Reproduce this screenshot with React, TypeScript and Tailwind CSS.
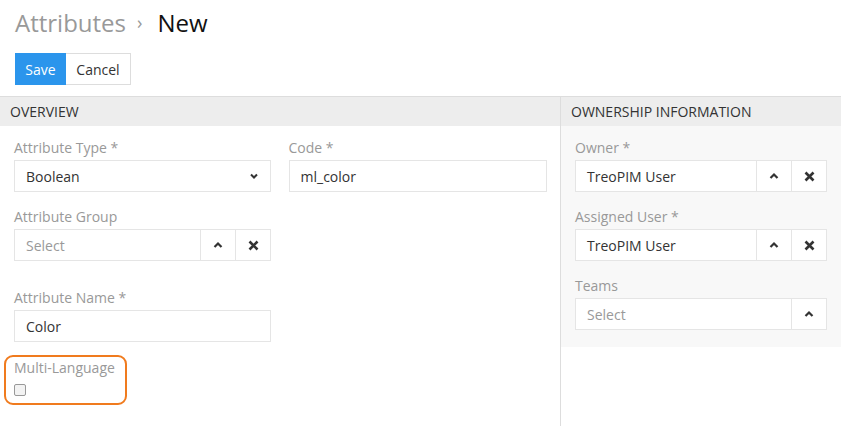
import React from 'react';

const font = { fontFamily: '"Open Sans", "Liberation Sans", sans-serif' };

function ChevronUp() {
  return (
    <svg width="10" height="8" viewBox="0 0 10 8">
      <path d="M1.5 6 L5 2.5 L8.5 6" fill="none" stroke="#333" strokeWidth="2.2" />
    </svg>
  );
}

function Times() {
  return (
    <svg width="11" height="11" viewBox="0 0 11 11">
      <path d="M1.5 1.5 L9.5 9.5 M9.5 1.5 L1.5 9.5" fill="none" stroke="#333" strokeWidth="2.6" />
    </svg>
  );
}

function Label({ children }: { children: React.ReactNode }) {
  return <div className="text-[14px] leading-[20px] text-[#999] mb-[2px]">{children}</div>;
}

function TextInput({ value }: { value: string }) {
  return (
    <div className="h-[32px] border border-[#e5e5e5] bg-white px-[11px] flex items-center text-[14px] text-[#333]">
      {value}
    </div>
  );
}

function LinkInput({ value, placeholder, clear = true }: { value?: string; placeholder?: string; clear?: boolean }) {
  return (
    <div className="h-[32px] border border-[#e5e5e5] bg-white flex text-[14px]">
      <div className={`flex-1 flex items-center px-[11px] ${value ? 'text-[#333]' : 'text-[#999]'}`}>
        {value ?? placeholder}
      </div>
      <div className="w-[35px] border-l border-[#e5e5e5] flex items-center justify-center">
        <ChevronUp />
      </div>
      {clear && (
        <div className="w-[35px] border-l border-[#e5e5e5] flex items-center justify-center">
          <Times />
        </div>
      )}
    </div>
  );
}

export default function App() {
  return (
    <div className="w-[841px] h-[426px] bg-white overflow-hidden" style={font}>
      <div className="px-[15px] pt-[6px] h-[53px]">
        <h1 className="text-[24px] leading-[34px] text-[#999] flex items-center">
          <span>Attributes</span>
          <span className="ml-[11px] mr-[15px] text-[18px] leading-[34px] -mt-[3px]">›</span>
          <span className="text-[#111]">New</span>
        </h1>
      </div>

      <div className="px-[15px] flex h-[32px]">
        <div className="w-[51px] bg-[#2b95ec] text-white text-[14px] flex items-center justify-center">Save</div>
        <div className="w-[65px] border border-l-0 border-[#ddd] text-[#333] text-[14px] flex items-center justify-center">
          Cancel
        </div>
      </div>

      <div className="mt-[11px] flex border-t border-[#ddd] h-[330px]">
        <div className="w-[560px]">
          <div className="h-[29px] bg-[#ededed] px-[10px] flex items-center text-[14px] text-[#333]">OVERVIEW</div>
          <div className="px-[14px] pt-[12px]">
            <div className="grid grid-cols-2 gap-x-[17px]">
              <div className="w-[257px]">
                <Label>Attribute Type *</Label>
                <div className="h-[32px] border border-[#e5e5e5] bg-white px-[11px] flex items-center justify-between text-[14px] text-[#333]">
                  <span>Boolean</span>
                  <svg width="10" height="8" viewBox="0 0 10 8">
                    <path d="M2 2.5 L5 5.5 L8 2.5" fill="none" stroke="#333" strokeWidth="2" />
                  </svg>
                </div>
              </div>
              <div className="w-[258px]">
                <Label>Code *</Label>
                <TextInput value="ml_color" />
              </div>
            </div>
            <div className="w-[257px] mt-[15px]">
              <Label>Attribute Group</Label>
              <LinkInput placeholder="Select" />
            </div>
            <div className="w-[257px] mt-[27px]">
              <Label>Attribute Name *</Label>
              <TextInput value="Color" />
            </div>
            <div className="-ml-[10px] mt-[13px] w-[123px] h-[50px] border-[2.5px] border-[#f07b1e] rounded-[9px] px-[8px] pt-[1px]">
              <div className="text-[14px] leading-[20px] text-[#999]">Multi-Language</div>
              <div className="mt-[6px] w-[12px] h-[12px] border border-[#999] rounded-[2px] bg-[#f3f3f3]" />
            </div>
          </div>
        </div>

        <div className="flex-1 border-l border-[#ddd]">
          <div className="h-[29px] bg-[#ededed] px-[10px] flex items-center text-[14px] text-[#333]">
            OWNERSHIP INFORMATION
          </div>
          <div className="bg-[#f8f8f8] px-[14px] pt-[12px] pb-[17px]">
            <Label>Owner *</Label>
            <LinkInput value="TreoPIM User" />
            <div className="mt-[15px]">
              <Label>Assigned User *</Label>
              <LinkInput value="TreoPIM User" />
            </div>
            <div className="mt-[15px]">
              <Label>Teams</Label>
              <LinkInput placeholder="Select" clear={false} />
            </div>
          </div>
        </div>
      </div>
    </div>
  );
}
